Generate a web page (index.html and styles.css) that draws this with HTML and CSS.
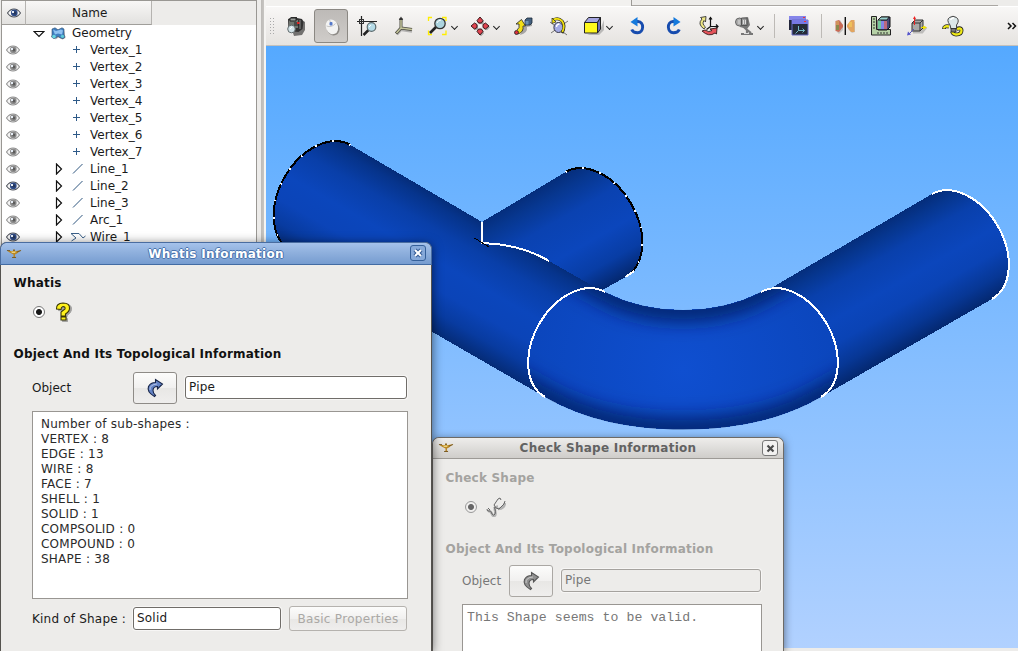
FILE: index.html
```
<!DOCTYPE html>
<html lang="en">
<head>
<meta charset="utf-8">
<title>Geometry</title>
<link rel="stylesheet" href="styles.css">
</head>
<body>
<svg class="defs" width="0" height="0">
  <symbol id="eye" viewBox="0 0 14 10">
    <path d="M.5 5C3 1.300 5 1 7 1s4 .3 6.500 4C11 8.700 9 9 7 9S3 8.700 .5 5z" class="lid" stroke-width="1.100"/>
    <circle cx="7.300" cy="4.900" r="3.300" stroke="none"/>
    <circle cx="7.800" cy="4.900" r="1.500" class="pupil"/>
    <rect x="5" y="3" width="2" height="2" fill="#e6edf6" stroke="none"/>
  </symbol>
  <symbol id="closed" viewBox="0 0 8 12"><path d="M1.500 1v10l5-5z" fill="#fff" stroke="#111" stroke-width="1.200"/></symbol>
  <symbol id="line" viewBox="0 0 12 12"><path d="M1 10.500L10.500 1" stroke="#2f567f" fill="none"/></symbol>
  <symbol id="plus" viewBox="0 0 12 12"><path d="M1 5.500h7M4.500 2v7" stroke="#2e5a88" fill="none"/></symbol>
  <symbol id="lamp" viewBox="0 0 16 12">
    <path d="M.5 2.500l4 .5h6l5-1-4.500 3.500-2 1v2l1.500 1.500h-4L7.500 8.500v-2L4.500 5z" fill="#b98726"/>
    <path d="M5 3.500h5l-1 1.500H6z" fill="#ecd27a"/><path d="M10 9.500H6M1 2.500h3M11 4l4-1.500" stroke="#6c5120" fill="none" stroke-width=".8"/>
    <path d="M7 1.500h2v1.500H7z" fill="#8c6a28"/>
  </symbol>
  <symbol id="pick" viewBox="0 0 20 20">
    <path d="M9.500 18.500Q1.500 14 3.500 8.500 5.500 4.500 10.500 4.500V1.500L17.500 6l-5 5V8.500q-4.500 0-4.500 4 0 2.500 2.500 5z" stroke-width="1.100"/>
    <path d="M5 12q-.5-5.500 7-6" fill="none" stroke="#fff" stroke-opacity=".5"/>
  </symbol>
</svg>

<div class="app">
  <aside class="browser">
    <div class="tree">
      <header class="tree-head">
        <span class="col-eye"><svg class="eye on" width="14" height="10"><use href="#eye"/></svg></span>
        <span class="col-name">Name</span>
      </header>
      <div class="row root">
        <svg class="open" width="12" height="8" viewBox="0 0 12 8"><path d="M1 1.500h10L6 6.500z" fill="#fff" stroke="#111" stroke-width="1.200"/></svg>
        <svg class="geom" width="15" height="13" viewBox="0 0 15 13">
          <path d="M3 3h10l1.500 8-3 1.500-4-2-3 2z" fill="#555" opacity=".5"/>
          <path d="M1 2L4 .8l3 2 4-2L13 2v6l1 2-2 1.700-3-1-2-1.500-2 1.500-2 1-2.500-1.700L1 8z" fill="#3f7ec0" stroke="#34506e" stroke-width=".6"/>
          <path d="M2 2.500l3 1.500 5-1.500 2 1-1 4-4-1-3 1z" fill="#8fc1f0"/><circle cx="3" cy="9.500" r="1.800" fill="#66d6dc"/><circle cx="11.500" cy="9.300" r="1.600" fill="#5ecbd6"/>
        </svg>
        <span>Geometry</span>
      </div>
      <div class="row"><svg class="eye"><use href="#eye"/></svg><i></i><svg class="kind"><use href="#plus"/></svg><span>Vertex_1</span></div>
      <div class="row"><svg class="eye"><use href="#eye"/></svg><i></i><svg class="kind"><use href="#plus"/></svg><span>Vertex_2</span></div>
      <div class="row"><svg class="eye"><use href="#eye"/></svg><i></i><svg class="kind"><use href="#plus"/></svg><span>Vertex_3</span></div>
      <div class="row"><svg class="eye"><use href="#eye"/></svg><i></i><svg class="kind"><use href="#plus"/></svg><span>Vertex_4</span></div>
      <div class="row"><svg class="eye"><use href="#eye"/></svg><i></i><svg class="kind"><use href="#plus"/></svg><span>Vertex_5</span></div>
      <div class="row"><svg class="eye"><use href="#eye"/></svg><i></i><svg class="kind"><use href="#plus"/></svg><span>Vertex_6</span></div>
      <div class="row"><svg class="eye"><use href="#eye"/></svg><i></i><svg class="kind"><use href="#plus"/></svg><span>Vertex_7</span></div>
      <div class="row"><svg class="eye"><use href="#eye"/></svg><i><svg width="8" height="12"><use href="#closed"/></svg></i><svg class="kind"><use href="#line"/></svg><span>Line_1</span></div>
      <div class="row"><svg class="eye on"><use href="#eye"/></svg><i><svg width="8" height="12"><use href="#closed"/></svg></i><svg class="kind"><use href="#line"/></svg><span>Line_2</span></div>
      <div class="row"><svg class="eye"><use href="#eye"/></svg><i><svg width="8" height="12"><use href="#closed"/></svg></i><svg class="kind"><use href="#line"/></svg><span>Line_3</span></div>
      <div class="row"><svg class="eye"><use href="#eye"/></svg><i><svg width="8" height="12"><use href="#closed"/></svg></i><svg class="kind"><use href="#line"/></svg><span>Arc_1</span></div>
      <div class="row"><svg class="eye on"><use href="#eye"/></svg><i><svg width="8" height="12"><use href="#closed"/></svg></i><svg class="kind" viewBox="0 0 12 12"><path d="M7 2.500H-1l5 4.500-4.500 3M7 2.500L11 7l2.500-2" stroke="#3a6088" fill="none"/></svg><span>Wire_1</span></div>
    </div>
  </aside>

  <main class="work">
    <div class="tabs"><div class="tabs-frame"></div></div>
    <nav class="toolbar">
      <span class="grip"></span>
      <span class="tool"><svg class="ic" viewBox="0 0 24 24">
        <path d="M6 10l4 12 8-1 3-5V8l-3-2z" fill="#222" opacity=".6"/>
        <path d="M4 5l3-1V3h6v1l5 1 1.500 3-1 7-4 3-10-1z" fill="#333"/><path d="M5 6h9v8H5z" fill="#70756f"/><path d="M6 4h6v3H6z" fill="#999e9a" stroke="#222"/>
        <path d="M10 9h6M10 11h6" stroke="#222"/><circle cx="7.500" cy="15" r="3.800" fill="#d3e3e8" stroke="#606a6c"/><path d="M6 15l2-2" stroke="#fff"/><path d="M13 8h3v2h-3z" fill="#d22"/><path d="M16 6v9" stroke="#888"/></svg></span>
      <span class="tool pressed"><svg class="ic" viewBox="0 0 24 24">
        <ellipse cx="14" cy="14.500" rx="6.300" ry="7" fill="#8d8a86" transform="rotate(-22 14 14)"/>
        <ellipse cx="13" cy="12.800" rx="6" ry="7.600" fill="#f3f3f2" transform="rotate(-22 13 13)"/>
        <path d="M7.500 12q5 2 9-2.500M10.500 5.500l1 3" stroke="#c5c5c5" fill="none"/><rect x="10.500" y="8" width="3" height="3.500" rx="1" fill="#5679c9"/></svg></span>
      <span class="tool"><svg class="ic" viewBox="0 0 24 24">
        <path d="M5.500 2v20M1 7.500h20" stroke="#222" stroke-width="1.200"/><rect x="3.500" y="5.500" width="4" height="4" fill="none" stroke="#333"/>
        <path d="M12.500 16l-5 5" stroke="#222" stroke-width="2.500"/><circle cx="15.500" cy="13" r="4.300" fill="#b6dce8" stroke="#5b6b6e" stroke-width="1.200"/><path d="M13 13l2-2" stroke="#fff"/></svg></span>
      <span class="tool"><svg class="ic" viewBox="0 0 24 24">
        <path d="M10 15l-5 5.500M10 16l10 1.500" stroke="#777" stroke-width="2.500" opacity=".5"/><path d="M9 14V4M9 14l-5 5.500M9 14l11 1.500" stroke="#4a4a40" stroke-width="3"/>
        <path d="M9 14V5M9 14l-4.500 5M9 14l11 1.500" stroke="#c4c59b" stroke-width="1.500"/><path d="M6.800 6L9 2.500 11.200 6z" fill="#333"/></svg></span>
      <span class="tool drop"><svg class="ic" viewBox="0 0 24 24">
        <path d="M2.500 7V3.500H6M16 3.500h4V7M2.500 16.500v4H6M16 20.500h4v-4" stroke="#ffee00" stroke-width="1.300" fill="none"/>
        <path d="M10 13l-6 6" stroke="#222" stroke-width="2.600"/><circle cx="14" cy="9.500" r="5.200" fill="#add4df" stroke="#333" stroke-width="1.300"/><path d="M11 9q1-3 4-3" stroke="#fff" fill="none"/></svg><b></b></span>
      <span class="tool drop"><svg class="ic" viewBox="0 0 24 24">
        <g transform="translate(1 1.200)" fill="#777" opacity=".6"><path d="M12 3l3 3-1 3h-4L9 6zM12 21l3-3-1-3h-4l-1 3zM3 12l3-3 3 1v4l-3 1zM21 12l-3-3-3 1v4l3 1z"/></g>
        <g fill="#e04450" stroke="#281010" stroke-width=".9"><path d="M12 3l3 3.500L13.500 9h-3L9 6.500zM12 21l-3-3.500 1.500-2.500h3l1.500 2.500zM3 12L6.500 9 9 10.500v3L6.500 15zM21 12l-3.500 3L15 13.500v-3L17.500 9z"/></g>
        <path d="M10.500 10.500h3v3h-3z" fill="#f8f8f8"/></svg><b></b></span>
      <span class="tool"><svg class="ic" viewBox="0 0 24 24">
        <path d="M9 21q8-2 7-8l5-1V7l-5-2z" fill="#555" opacity=".45"/><path d="M14 6l2-2h5v5l-2 2h-5z" fill="#44607e" stroke="#1b2939" stroke-width=".8"/><path d="M14.500 7h3v3.500h-3z" fill="#6c92b5"/>
        <path d="M7 20q6-2 5-8h2.500L10.500 5.500 5 10h3q1 4-2 6" fill="#f3df17" stroke="#222" stroke-width=".8"/><circle cx="5.500" cy="18.500" r="2" fill="#d6303e" stroke="#222" stroke-width=".8"/></svg></span>
      <span class="tool"><svg class="ic" viewBox="0 0 24 24">
        <path d="M3 8l17 13M4 19L21 7" stroke="#555" stroke-width=".8"/><ellipse cx="11.500" cy="13.500" rx="4.600" ry="5" fill="#a3aae4" stroke="#334"/><path d="M9.500 13q0-3 3-3" stroke="#fff" fill="none" stroke-width="1.300"/>
        <path d="M6 6q5-3 9 1 4 5 0 12" fill="none" stroke="#222" stroke-width="3"/><path d="M6 6q5-3 9 1 3.500 5 .3 11" fill="none" stroke="#f1e00e" stroke-width="1.800"/><path d="M5 4v5.500l4-1.500z" fill="#f1e00e" stroke="#222" stroke-width=".7"/></svg></span>
      <span class="tool drop"><svg class="ic" viewBox="0 0 24 24">
        <path d="M6 21h12l5-5V6l-4 10z" fill="#888" opacity=".5"/><path d="M3.500 8.500l4-5h12l-3 5z" fill="#a5a5e0" stroke="#222"/><path d="M16.500 8.500l3-5V15l-3 4z" fill="#6e6eba" stroke="#222"/><path d="M3.500 8.500h13V19h-13z" fill="#fff81c" stroke="#222"/></svg><b></b></span>
      <span class="tool"><svg class="ic" viewBox="0 0 24 24"><path d="M10 7.500h3c6.500 .5 6 11-.5 11.300-3.500 0-5-1.300-5.800-3.300" fill="none" stroke="#174cae" stroke-width="2.900"/><path d="M5.500 8L12.500 3v9.500z" fill="#1579dc"/></svg></span>
      <span class="tool"><svg class="ic" viewBox="0 0 24 24"><path d="M15 7.500h-3c-6.500 .5-6 11 .5 11.300 3.500 0 5-1.300 5.800-3.300" fill="none" stroke="#174cae" stroke-width="2.900"/><path d="M19.500 8L12.500 3v9.500z" fill="#1579dc"/></svg></span>
      <span class="tool"><svg class="ic" viewBox="0 0 24 24">
        <path d="M13.500 4v8.500h7M13.500 12.500l-4 3M12 5.500l1.500-2 1.500 2M19 10.500l2 2-2 2" stroke="#111" stroke-width="1.200" fill="none"/><path d="M7 15Q0 10 5 5L3.500 3.500 9 2.500 8.500 8 7 6.500Q4.500 10 8.500 13z" fill="#eee784" stroke="#333" stroke-width=".9"/>
        <path d="M5 17l3-1q4 3 7 .5L13 15l7-1-.5 6-1.500-1q-6 4.500-13-2z" fill="#e6545b" stroke="#331818" stroke-width=".9"/></svg></span>
      <span class="tool drop gear"><svg class="ic" viewBox="0 0 24 24">
        <path d="M5 5l11-2 2 8-3 4-7-2z" fill="#777"/><circle cx="7.500" cy="8" r="4" fill="#aaa" stroke="#666"/><path d="M9.500 4H15v7.500H9.500z" fill="#999" stroke="#555"/><path d="M7 6v4M11.500 6v4M13.500 6v4" stroke="#ddd"/><path d="M12 13l3 3v4M9 20h12M14 15l5 4" stroke="#777" stroke-width="2.200"/><path d="M12 19.500h5" stroke="#ddd"/></svg><b></b></span>
      <span class="sep"></span>
      <span class="tool"><svg class="ic" viewBox="0 0 24 24">
        <path d="M3 2h17v14H3z" fill="#23263a"/><path d="M3 2h17v4H3z" fill="#8585e9"/><path d="M6 6h16v15H6z" fill="#252b38" stroke="#666bc4"/><path d="M6 6h16v4H6z" fill="#7878e4"/><path d="M17 3.500h2M18 7.500h2" stroke="#e33" stroke-width="1"/><path d="M12.500 12v4.500h6M12.500 16.500l-3 3M16.500 14.500l2 2-2 2" stroke="#75bac9" fill="none"/></svg></span>
      <span class="sep"></span>
      <span class="tool"><svg class="ic" viewBox="0 0 24 24">
        <path d="M4 8l3-2 3 5v5l-4 4-2-2zM17 7l5 1v10l-3 1-4-4v-4z" fill="#888" opacity=".4"/><path d="M2.500 7L6 6l4 5v2l-4 5-3.500-1z" fill="#c96a55"/><path d="M3 7h3v4H3z" fill="#d0925a"/><path d="M3 11h3v5H3z" fill="#8b8a4c"/><path d="M21.500 6L18 6l-4 5v2l4 5 3.500 0z" fill="#e3a55f"/><path d="M16 8h3v5h-3z" fill="#eec05c"/><path d="M12.300 3v18" stroke="#111" stroke-width="1.400"/></svg></span>
      <span class="tool"><svg class="ic" viewBox="0 0 24 24">
        <path d="M2.500 2.500h5v13h14v5.500h-19z" fill="#b6d1a6" stroke="#222"/><path d="M4 5h2M4 8h2M4 11h2M4 14h2M9 18v2M12 18v2M15 18v2M18 18v2" stroke="#333"/><path d="M9 6l3-3h9v10l-3 3H9z" fill="#484878" stroke="#111"/><path d="M9 6h3v9H9z" fill="#75c99b"/><path d="M12 7h3v8h-3z" fill="#8186e8"/><path d="M15 7h3v8h-3z" fill="#bd687e"/><path d="M9 6l3-3h8l-2 3z" fill="#9ad2d2" stroke="#222"/></svg></span>
      <span class="tool"><svg class="ic" viewBox="0 0 24 24">
        <path d="M8 18h9l4-5" stroke="#777" stroke-width="3" opacity=".4" fill="none"/><path d="M7 9l3-3h8v8l-3 3H7zM7 9h8v8M15 9l3-3" fill="#a8a8a6" stroke="#333"/><path d="M9.500 11V4" stroke="#e22"/><path d="M8 5l1.500-3L11 5z" fill="#e22"/><path d="M16 13.500h4" stroke="#e8d700"/><path d="M18 11.500l4 2-4 2z" fill="#f1e300"/><path d="M9 15l-5 5" stroke="#5555bb"/><path d="M2 21.500l1-4 3 3z" fill="#5555cc"/></svg></span>
      <span class="tool"><svg class="ic" viewBox="0 0 24 24">
        <path d="M8 12.500q-5-1-5 2.500M15.500 15q5-2 5 1.500 0 4-5.500 4-3 0-4-3" fill="none" stroke="#222" stroke-width="3.900"/><path d="M8 12.500q-5-1-5 2M16 15q4.500-1.500 4.500 1.500 0 4-5.500 4-3 0-4-3" fill="none" stroke="#f0ea18" stroke-width="2.300"/>
        <path d="M9 11q-4-5-.5-7.500 3.500-2.500 7 0 3.500 3 0 7.500v4H10z" fill="#dce7e9" stroke="#444"/><path d="M9.500 6q1-2.500 3.500-2" stroke="#fff" stroke-width="1.500" fill="none"/><path d="M10 14.500h5V18h-5z" fill="#777" stroke="#222" stroke-width=".8"/></svg></span>
      <span class="more"><svg width="10" height="8" viewBox="0 0 10 8"><path d="M1 1l3 3-3 3M5.500 1l3 3-3 3" fill="none" stroke="#111" stroke-width="1.500"/></svg></span>
    </nav>

    <section class="view">
      <svg class="scene" viewBox="266 46 752 602" width="752" height="602">
        <defs>
          <linearGradient id="fall" gradientUnits="userSpaceOnUse" x1="350" y1="145" x2="290" y2="250">
            <stop offset="0" stop-color="#052c78"/><stop offset=".08" stop-color="#06348c"/><stop offset=".25" stop-color="#093fa9"/><stop offset=".48" stop-color="#0b46bc"/><stop offset=".68" stop-color="#0b44b8"/><stop offset=".85" stop-color="#083ba0"/><stop offset="1" stop-color="#052c78"/>
          </linearGradient>
          <linearGradient id="rise" gradientUnits="userSpaceOnUse" x1="932" y1="194" x2="992" y2="299">
            <stop offset="0" stop-color="#052d7a"/><stop offset=".1" stop-color="#06368f"/><stop offset=".25" stop-color="#0940ac"/><stop offset=".5" stop-color="#0b46bc"/><stop offset=".68" stop-color="#0a43b5"/><stop offset=".86" stop-color="#073795"/><stop offset="1" stop-color="#042870"/>
          </linearGradient>
          <linearGradient id="branch" gradientUnits="userSpaceOnUse" x1="565" y1="172" x2="625" y2="277">
            <stop offset="0" stop-color="#052d7a"/><stop offset=".12" stop-color="#073790"/><stop offset=".32" stop-color="#0a42b1"/><stop offset=".6" stop-color="#0b46bc"/><stop offset=".82" stop-color="#083da5"/><stop offset="1" stop-color="#042870"/>
          </linearGradient>
          <radialGradient id="bend" gradientUnits="userSpaceOnUse" cx="683" cy="370" r="150"><stop offset="0" stop-color="#0f4fd0"/><stop offset="1" stop-color="#0b46bd"/></radialGradient>
          <path id="bendShape" d="M605 292C628 304 655 310 683 310S738 304 761 292A60 41 60 0 1 821 397C781 420 735 429.500 683 429.500S585 420 545 397A60 41 -60 0 1 605 292z"/>
          <clipPath id="bendClip"><use href="#bendShape"/></clipPath>
          <filter id="soft" filterUnits="userSpaceOnUse" x="480" y="240" width="420" height="240"><feGaussianBlur stdDeviation="10"/></filter>
        </defs>
        <path class="crisp" d="M565.500 172A60 41 60 0 1 625.500 277L590 297 470 270 482 222z" fill="url(#branch)"/>
        <path class="crisp" d="M761 294L932 194A60 41 60 0 1 992 299L821 397z" fill="url(#rise)"/>
        <path class="crisp" d="M350.500 145L482 222V243Q520 244 549 261L598 289 605 292 600 400 545 397 290.500 250A60 41 -60 0 1 350.500 145z" fill="url(#fall)"/>
        <use class="crisp" href="#bendShape" fill="url(#bend)"/>
        <g clip-path="url(#bendClip)"><path d="M520 245L605 292C628 304 655 310 683 310S738 304 761 292L846 245M460 350L545 397C585 420 635 429.500 683 429.500S781 420 821 397L906 350" fill="none" stroke="#021d5c" stroke-width="19" filter="url(#soft)"/></g>
        <g class="crisp" fill="none" stroke-width="2">
          <path d="M350.500 145A60 41 -60 0 0 290.500 250M565.500 172A60 41 60 0 1 625.500 277" stroke="#000"/>
          <path d="M350.500 145A60 41 -60 0 0 290.500 250M565.500 172A60 41 60 0 1 625.500 277" stroke="#fff" stroke-dasharray="1.500 16"/>
          <path d="M634 271L625.500 277M482 222V243Q520 244 549 261M605 292A60 41 -60 0 0 545 397M761 292A60 41 60 0 1 821 397M932 194A60 41 60 0 1 992 299" stroke="#fff"/>
          <path d="M474.500 238L489 247" stroke="#000" stroke-width="1"/>
        </g>
      </svg>
    </section>
  </main>
</div>

<section class="dialog check">
  <header class="bar"><svg class="lamp" width="16" height="12"><use href="#lamp"/></svg><h2>Check Shape Information</h2><span class="close"><svg width="9" height="9" viewBox="0 0 9 9"><path d="M1.500 1.500l6 6M7.500 1.500l-6 6" stroke="#4b4b4b" stroke-width="2.200"/></svg></span></header>
  <div class="body">
    <h3>Check Shape</h3>
    <div class="choice"><span class="radio"></span>
      <svg width="20" height="20" viewBox="0 0 20 20"><path d="M2 14q3 0 4 3t3 1.500q1-1 0-5t3-4M12 12q6 0 7-6" fill="none" stroke="#b2b2b2" stroke-width="2.600"/><path d="M1 12q0 3 2 2t3 3q2 2.500 3 0t0-5M2 11l2 2M8 8l2 3 3 1 5-5 1-3M8 8l2-3 2-3 2-1 1 2M9 12l-1-2" fill="none" stroke="#666" stroke-width="1"/><path d="M10 8l3-5M12 10l5-3" stroke="#eee"/></svg></div>
    <h3>Object And Its Topological Information</h3>
    <div class="object"><label>Object</label><span class="btn"><svg class="gray" width="20" height="20"><use href="#pick"/></svg></span><span class="field">Pipe</span></div>
    <div class="report">This Shape seems to be valid.</div>
  </div>
</section>

<section class="dialog whatis">
  <header class="bar"><svg class="lamp" width="16" height="12"><use href="#lamp"/></svg><h2>Whatis Information</h2><span class="close"><svg width="10" height="10" viewBox="0 0 10 10"><path d="M2 2l6 6M8 2l-6 6" stroke="#335b95" stroke-width="4.200"/><path d="M2 2l6 6M8 2l-6 6" stroke="#fff" stroke-width="2"/></svg></span></header>
  <div class="body">
    <h3>Whatis</h3>
    <div class="choice"><span class="radio"></span>
      <svg width="18" height="20" viewBox="0 0 18 20"><path d="M2.500 8q-.5-6 6.500-6.500 7 0 6.500 5.500 0 3-4.500 6v1.500H6.500V10l4-2.500q1-2.500-1.500-2.500-2 .5-2 3zM6.500 16h5v3h-5z" fill="#555" stroke="#555" opacity=".5" transform="translate(1 .6)"/><path d="M1.500 7Q1 1.500 8 1q7 0 6.500 5.500 0 3-4 5.500v2H6V10l4-3q.5-2.500-2-2.500-2 .5-2 3zM6 15h5v3H6z" fill="#fff21c" stroke="#3a3805" stroke-width="1.100"/></svg></div>
    <h3>Object And Its Topological Information</h3>
    <div class="object"><label>Object</label><span class="btn"><svg class="blue" width="20" height="20"><use href="#pick"/></svg></span><span class="field">Pipe</span></div>
    <div class="report">Number of sub-shapes :<br>VERTEX : 8<br>EDGE : 13<br>WIRE : 8<br>FACE : 7<br>SHELL : 1<br>SOLID : 1<br>COMPSOLID : 0<br>COMPOUND : 0<br>SHAPE : 38</div>
    <div class="kindrow"><label>Kind of Shape :</label><span class="field">Solid</span><span class="btn off">Basic Properties</span></div>
  </div>
</section>
</body>
</html>
```
FILE: styles.css
```
* { box-sizing: border-box; }
body { margin: 0; width: 1018px; height: 651px; overflow: hidden; background: #edecea; font: 12px "DejaVu Sans", sans-serif; color: #1a1a1a; }
svg { display: block; flex: none; }
.defs { position: absolute; }
.app { display: flex; height: 651px; }

.browser { width: 266px; padding-left: 1px; background: linear-gradient(90deg, #edecea 261px, #bcbab7 261px, #c8c6c3 264px, #f5f4f2 264px); }
.tree { width: 256px; height: 651px; background: #fff; border: 1px solid #999793; border-bottom: 0; }
.tree-head { display: flex; height: 24px; background: #edecea; }
.tree-head span { background: linear-gradient(#f8f7f6, #e2e1df); border-bottom: 1px solid #a09e9a; display: flex; align-items: center; }
.col-eye { width: 24px; justify-content: center; border-right: 1px solid #b5b3b0; }
.col-name { width: 126px; padding-left: 46px; border-right: 1px solid #b5b3b0; }
.eye { width: 14px; height: 10px; margin-left: 4px; fill: #8c8c8c; stroke: #8f8f8f; }
.eye.on { fill: #2d4a86; stroke: #4b4f58; }
.lid { fill: #f4f4f4; }
.pupil { fill: #222; fill-opacity: .45; stroke: none; }
.tree-head .eye { margin: 0; }
.row { display: flex; align-items: center; height: 17px; white-space: nowrap; }
.row .eye, .row i, .row .kind { margin-top: -1px; }
.row i { width: 8px; margin-left: 35px; }
.kind { width: 12px; height: 12px; margin: 0 6px 0 9px; overflow: visible; }
.row span { line-height: 17px; letter-spacing: .02px; }
.root .open { margin-left: 31px; }
.root .geom { margin: 0 6px; }

.work { width: 752px; display: flex; flex-direction: column; background: #edecea; }
.tabs { height: 6px; background: #f2f1ef; display: flex; justify-content: flex-end; }
.tabs-frame { width: 387px; height: 6px; border-left: 1px solid #9c9a96; background: linear-gradient(#aaa7a3, #aaa7a3) 0 5px / 366px 1px no-repeat, #edecea; }
.toolbar { display: flex; align-items: center; height: 40px; background: linear-gradient(#f8f7f6, #e5e3e0); border-bottom: 1px solid #c4c1bc; border-top: 1px solid #fff; }
.grip { width: 7px; height: 18px; margin: 0 2px 0 3px; background: radial-gradient(circle, #aaa 32%, transparent 40%) 0 0 / 3px 3px; }
.tool { display: flex; align-items: center; justify-content: center; width: 36px; height: 36px; }
.ic { width: 24px; height: 24px; fill: none; }
.pressed { width: 34px; height: 34px; margin-right: 2px; border: 1px solid #8b8883; border-radius: 3px; background: linear-gradient(#bdbab7, #cfccc9); }
.drop { width: 41.500px; justify-content: flex-start; padding-left: 5px; }
.drop .ic { margin-left: -1px; margin-right: 1px; }
.drop.gear { padding-left: 6px; }
.drop b { width: 5px; height: 5px; border: solid #222; border-width: 0 1.500px 1.500px 0; transform: rotate(45deg); margin: 0 0 0 1px; flex: none; }
.sep { width: 1px; height: 24px; background: #bdbab6; margin: 0 5px 0 6px; }
.sep + .tool + .sep { margin: 0 5px; }
.more { margin-left: 36px; }
.view { height: 602px; background: linear-gradient(#55a9ff, #b1d1ff); }
.crisp { shape-rendering: crispEdges; }

.dialog { position: absolute; background: #edecea; border: 1px solid #6d6a66; border-bottom: 0; border-radius: 7px 7px 0 0; }
.bar { display: flex; align-items: center; height: 22px; padding: 0 5px; border-radius: 6px 6px 0 0; }
.bar h2 { flex: 1; margin: 0; text-align: center; font-size: 12px; letter-spacing: .27px; }
.close { display: flex; align-items: center; justify-content: center; width: 16px; height: 16px; border: 1px solid; border-radius: 3px; }
h3 { margin: 0; font-size: 12px; line-height: 16px; letter-spacing: .21px; color: #111; }
.radio { width: 12px; height: 12px; border: 1px solid #777; border-radius: 50%; background: radial-gradient(circle, #181818 2.500px, #fff 3.500px); }
.choice, .object, .kindrow { display: flex; align-items: center; }
.btn { display: flex; align-items: center; justify-content: center; border: 1px solid #8e8b87; border-radius: 3px; background: linear-gradient(#fcfcfb, #f1f0ef 50%, #e8e7e5 51%, #efeeed); }
.field { border: 1px solid #706d69; border-radius: 3px; background: #fff; padding-left: 3px; height: 23px; line-height: 21px; letter-spacing: .2px; box-shadow: 0 0 0 1px #f7f6f5; }
.report { background: #fff; border: 1px solid #999692; }

.whatis { left: 0; top: 242px; width: 432px; height: 409px; border-color: #55534f; box-shadow: 0 2px 11px rgba(0,0,0,.6); }
.whatis .bar { background: linear-gradient(#a5c2eb, #8fb0dd 45%, #769cd0); border-bottom: 1px solid #426ba3; box-shadow: 0 0 0 1px #4a6da0; clip-path: inset(-1px -1px 0 -1px); }
.whatis h2 { color: #fff; text-shadow: 1px 0 #4873ae, -1px 0 #4873ae, 0 1px #4873ae, 0 -1px #4873ae; }
.whatis .close { border-color: #35609a; background: #86a9d9; margin-top: -1px; }
.whatis .body { padding: 10px 24px 0 31px; }
.whatis h3 { margin-left: -18.500px; }
.whatis .choice { height: 26px; margin: 8px 0 21px 1px; }
.whatis .choice svg { margin-left: 10px; }
.whatis .object { height: 34px; margin-top: 9px; }
.whatis .object label { width: 101px; }
.whatis .btn { width: 44px; height: 32px; }
.whatis .object .field { width: 222px; margin-left: 8px; margin-top: -1px; }
.whatis .report { width: 376px; height: 188px; margin-top: 6px; padding: 5px 8px; line-height: 15px; letter-spacing: .24px; color: #2a2a2a; }
.whatis .kindrow { height: 25px; margin-top: 7px; letter-spacing: .2px; }
.kindrow label { width: 101px; }
.kindrow .field { width: 148px; }
.whatis .btn.off { width: 118px; height: 25px; margin-left: 8px; color: #aaa8a5; border-color: #b5b2ae; letter-spacing: .3px; }

.check { left: 432px; top: 437px; width: 352px; height: 214px; box-shadow: 0 2px 9px rgba(0,0,0,.5); }
.check .bar { background: linear-gradient(#eeedeb, #cfcdca); border-bottom: 1px solid #9d9a96; height: 21px; }
.check h2 { color: #626262; }
.check .close { border-color: #777; background: #f2f1f0; }
.check .body { padding: 11px 20px 0 29px; color: #777; }
.check h3 { color: #a4a3a0; margin-left: -16.500px; }
.check .choice { height: 24px; margin: 9px 0 22px 3px; }
.check .radio { border-color: #999; background: radial-gradient(circle, #666 2.500px, #f0efee 3.500px); }
.check .choice svg { margin-left: 9px; }
.check .object { height: 34px; margin-top: 7px; }
.check .object label { width: 47px; }
.check .btn { width: 44px; height: 32px; border-color: #aaa7a3; }
.check .field { width: 200px; margin-left: 8px; margin-top: -1px; border-color: #a5a29e; background: #edecea; }
.check .report { width: 300px; height: 60px; margin-top: 6px; padding: 5px 4px; font: 13.200px/16px "Liberation Mono", monospace; letter-spacing: .06px; }
.blue { fill: #6483c6; stroke: #172447; }
.gray { fill: #909090; stroke: #555; }
```
